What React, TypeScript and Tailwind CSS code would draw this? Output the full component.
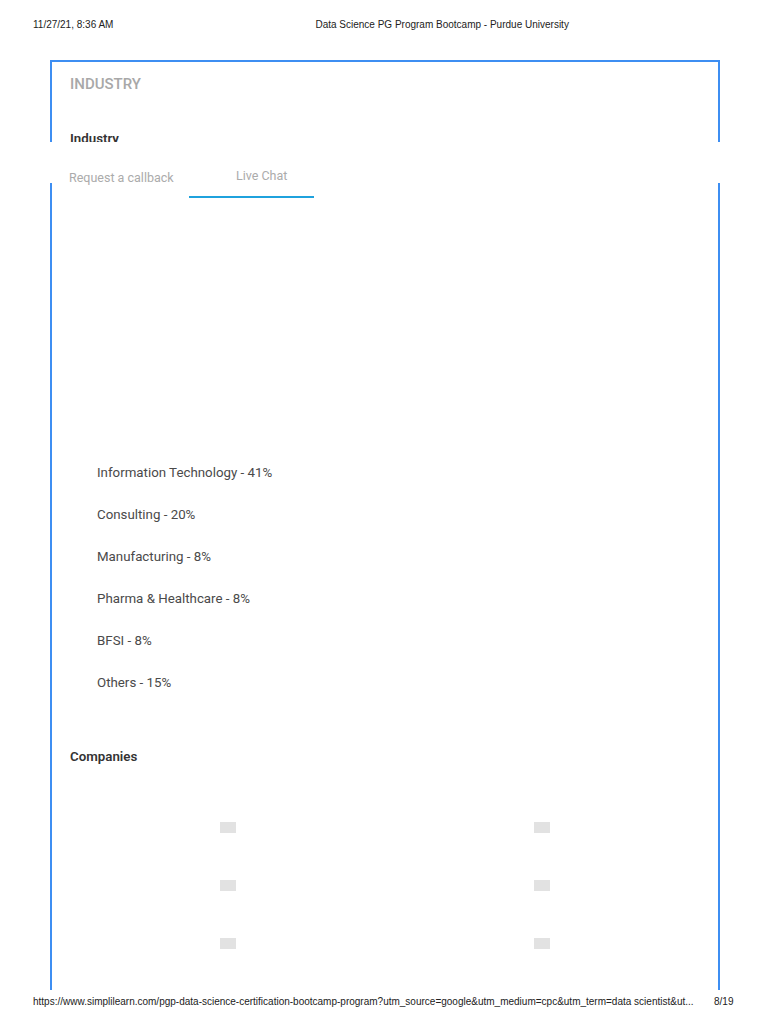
import React from "react";

const industries = [
  "Information Technology - 41%",
  "Consulting - 20%",
  "Manufacturing - 8%",
  "Pharma & Healthcare - 8%",
  "BFSI - 8%",
  "Others - 15%",
];

// logo placeholders that never loaded
const logoRows = [0, 1, 2];

export default function App() {
  return (
    <div className="relative w-[768px] h-[1024px] overflow-hidden bg-white font-['Roboto',sans-serif]">
      {/* print header */}
      <div className="flex h-[48px] items-center pl-[33px] font-['Liberation_Sans',Arial,sans-serif] text-[10px] text-[#222]">
        <span>11/27/21, 8:36 AM</span>
        <span className="ml-[202px]">Data Science PG Program Bootcamp - Purdue University</span>
      </div>

      <div className="mt-[12px] ml-[50px] w-[670px] h-[930px] border-x-2 border-t-2 border-[#3d8ef2] pl-[18px]">
        <h2 className="pt-[12px] text-[15px] leading-[20px] font-medium text-[#a8a8a8]">INDUSTRY</h2>
        <h3 className="mt-[36px] text-[13.3px] leading-[18px] font-semibold text-[#333]">Industry</h3>

        <ul className="mt-[316px] pl-[27px] flex flex-col gap-[24px]">
          {industries.map((item) => (
            <li key={item} className="text-[13.3px] leading-[18px] text-[#4a4a4a]">
              {item}
            </li>
          ))}
        </ul>

        <h3 className="mt-[56px] text-[13.3px] leading-[18px] font-semibold text-[#333]">Companies</h3>

        <div className="mt-[56px] flex flex-col gap-[47px]">
          {logoRows.map((r) => (
            <div key={r} className="flex">
              <div className="ml-[150px] w-[16px] h-[11px] bg-[#e2e2e2]" />
              <div className="ml-[298px] w-[16px] h-[11px] bg-[#e2e2e2]" />
            </div>
          ))}
        </div>
      </div>

      {/* sticky contact tabs laid over the page */}
      <div className="absolute left-[44px] top-[142px] w-[682px] h-[41px] bg-white">
        <span className="absolute left-[25px] top-[36px] -translate-y-1/2 text-[12.5px] text-[#ababab]">
          Request a callback
        </span>
        <span className="absolute left-[192px] top-[34px] -translate-y-1/2 text-[12.5px] text-[#ababab]">
          Live Chat
        </span>
      </div>
      <div className="absolute left-[189px] top-[196px] w-[125px] h-[2px] bg-[#1fa2dd]" />

      {/* print footer */}
      <div className="absolute left-0 top-[993px] flex w-full h-[16px] items-center pl-[33px] font-['Liberation_Sans',Arial,sans-serif] text-[10px] text-[#222]">
        <span className="w-[681px] whitespace-nowrap">
          https://www.simplilearn.com/pgp-data-science-certification-bootcamp-program?utm_source=google&amp;utm_medium=cpc&amp;utm_term=data scientist&amp;ut...
        </span>
        <span>8/19</span>
      </div>
    </div>
  );
}
